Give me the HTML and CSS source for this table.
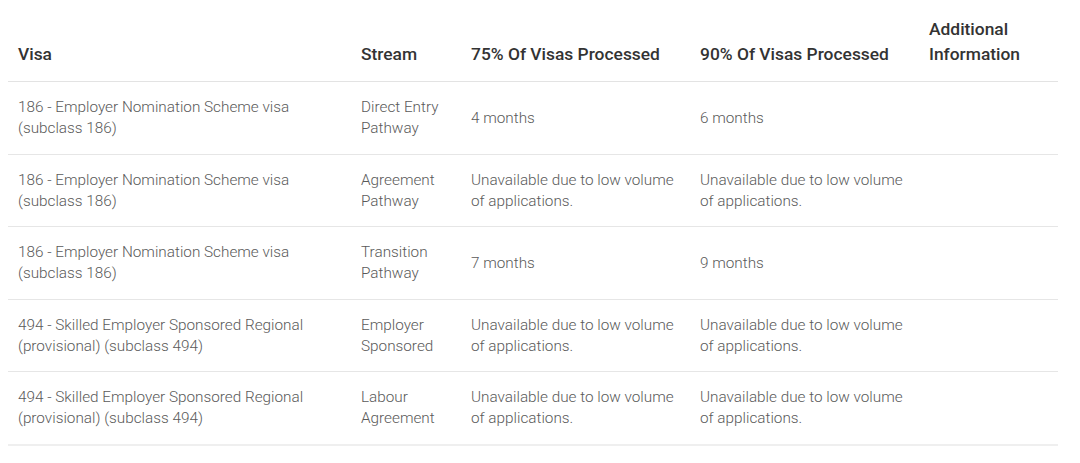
FILE: index.html
```html
<!DOCTYPE html>
<html lang="en">
<head>
<meta charset="utf-8">
<title>Visa processing times</title>
<link rel="stylesheet" href="styles.css">
</head>
<body>
<table class="times">
  <colgroup>
    <col class="c-visa">
    <col class="c-stream">
    <col class="c-p75">
    <col class="c-p90">
    <col class="c-info">
  </colgroup>
  <thead>
    <tr>
      <th>Visa</th>
      <th>Stream</th>
      <th>75% Of Visas Processed</th>
      <th>90% Of Visas Processed</th>
      <th>Additional Information</th>
    </tr>
  </thead>
  <tbody>
    <tr>
      <td>186 - Employer Nomination Scheme visa (subclass 186)</td>
      <td>Direct Entry Pathway</td>
      <td>4 months</td>
      <td>6 months</td>
      <td></td>
    </tr>
    <tr>
      <td>186 - Employer Nomination Scheme visa (subclass 186)</td>
      <td>Agreement Pathway</td>
      <td>Unavailable due to low volume of applications.</td>
      <td>Unavailable due to low volume of applications.</td>
      <td></td>
    </tr>
    <tr>
      <td>186 - Employer Nomination Scheme visa (subclass 186)</td>
      <td>Transition Pathway</td>
      <td>7 months</td>
      <td>9 months</td>
      <td></td>
    </tr>
    <tr>
      <td>494 - Skilled Employer Sponsored Regional (provisional) (subclass 494)</td>
      <td>Employer Sponsored</td>
      <td>Unavailable due to low volume of applications.</td>
      <td>Unavailable due to low volume of applications.</td>
      <td></td>
    </tr>
    <tr>
      <td>494 - Skilled Employer Sponsored Regional (provisional) (subclass 494)</td>
      <td>Labour Agreement</td>
      <td>Unavailable due to low volume of applications.</td>
      <td>Unavailable due to low volume of applications.</td>
      <td></td>
    </tr>
  </tbody>
</table>
</body>
</html>
```

FILE: styles.css
```css
html, body {
  background: #ffffff;
}
body {
  margin: 8px;
  font-family: Roboto, "Liberation Sans", Arial, sans-serif;
}
.times {
  width: 1050px;
  table-layout: fixed;
  border-collapse: collapse;
}
.c-visa { width: 343px; }
.c-stream { width: 110px; }
.c-p75 { width: 229px; }
.c-p90 { width: 229px; }
.c-info { width: 139px; }

.times th {
  text-align: left;
  vertical-align: bottom;
  font-size: 17.4px;
  font-weight: 500;
  line-height: 25px;
  color: #333333;
  padding: 9px 10px 14px;
  border-bottom: 1px solid #e3e3e3;
}
.times td {
  vertical-align: middle;
  font-size: 15.3px;
  font-weight: 300;
  line-height: 21px;
  color: #5a5a5a;
  padding: 15px 10px 14.6px;
  border-bottom: 1px solid #e6e6e6;
}
.times tbody tr:last-child td {
  border-bottom: 2px solid #efefef;
}
```
